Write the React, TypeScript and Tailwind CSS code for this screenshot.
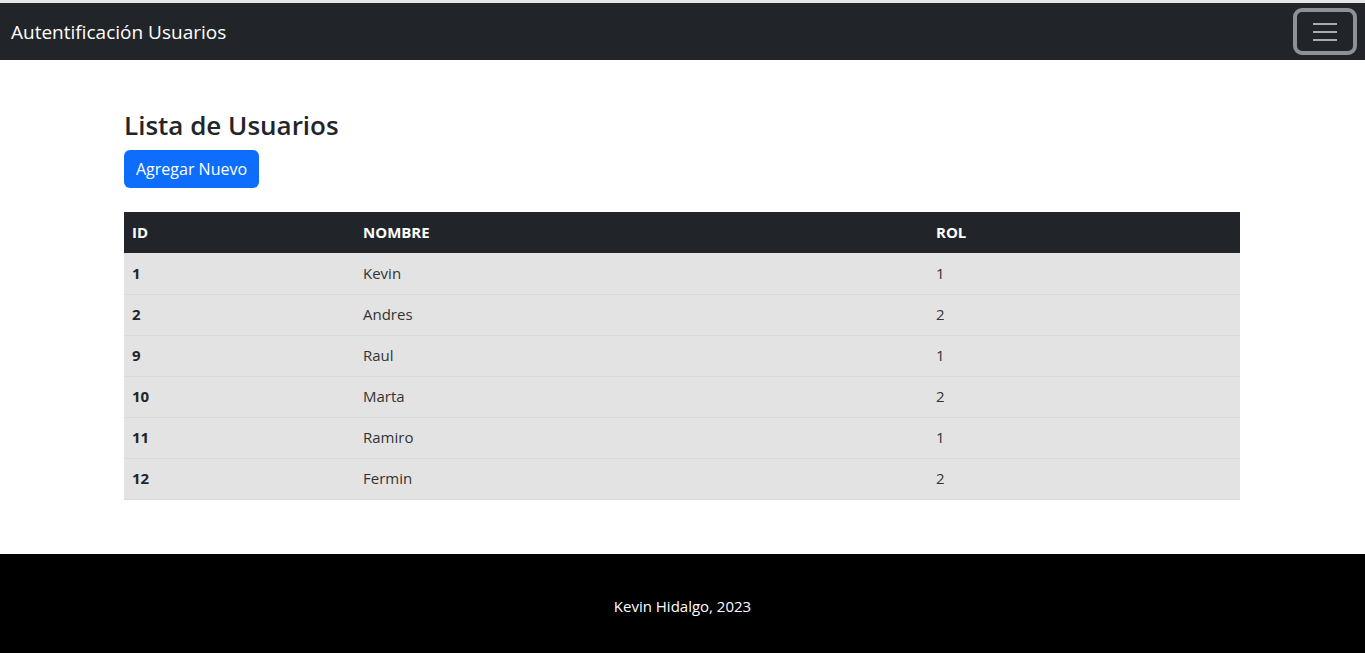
const users = [
  { id: 1, nombre: 'Kevin', rol: 1 },
  { id: 2, nombre: 'Andres', rol: 2 },
  { id: 9, nombre: 'Raul', rol: 1 },
  { id: 10, nombre: 'Marta', rol: 2 },
  { id: 11, nombre: 'Ramiro', rol: 1 },
  { id: 12, nombre: 'Fermin', rol: 2 },
];

export default function App() {
  return (
    <div className="min-h-screen bg-white text-[#212529] font-['Open_Sans',sans-serif]">
      {/* Top strip */}
      <div className="h-[3px] bg-[#e6e6e6]" />

      {/* Navbar */}
      <nav className="h-[57px] bg-[#212529] flex items-center justify-between pl-[11px] pr-[8px]">
        <span className="text-white text-[19px] leading-[30px]">Autentificación Usuarios</span>
        <button className="w-[64px] h-[47px] rounded-[9px] border-[4px] border-[#8e9195] flex items-center justify-center">
          <svg width="26" height="22" viewBox="0 0 26 22">
            <path d="M1 3h24M1 11h24M1 19h24" stroke="#a9abae" strokeWidth="2" />
          </svg>
        </button>
      </nav>

      {/* Content */}
      <main className="w-[1116px] ml-[124px] pt-[48px] pb-[38px]">
        <h3 className="text-[26px] leading-[34px] font-semibold mb-[8px]">Lista de Usuarios</h3>
        <button className="h-[38px] px-[12px] rounded-[6px] bg-[#0d6efd] text-white text-[16px]">
          Agregar Nuevo
        </button>

        <table className="w-full mt-[24px] mb-[16px] border-collapse text-[15px]">
          <thead>
            <tr className="bg-[#212529] text-white h-[41px]">
              <th className="w-[231px] text-left font-bold px-[8px]">ID</th>
              <th className="w-[573px] text-left font-bold px-[8px]">NOMBRE</th>
              <th className="text-left font-bold px-[8px]">ROL</th>
            </tr>
          </thead>
          <tbody>
            {users.map((u) => (
              <tr key={u.id} className="bg-[#e3e3e3] h-[41px] border-b border-[#dadada]">
                <td className="px-[8px] font-bold text-[#212529]">{u.id}</td>
                <td className="px-[8px] text-[#333]">{u.nombre}</td>
                <td className="px-[8px] text-[#333]">{u.rol}</td>
              </tr>
            ))}
          </tbody>
        </table>
      </main>

      {/* Footer */}
      <footer className="bg-black text-white text-center py-[40px] text-[15px] leading-[24px]">
        Kevin Hidalgo, 2023
      </footer>
    </div>
  );
}
